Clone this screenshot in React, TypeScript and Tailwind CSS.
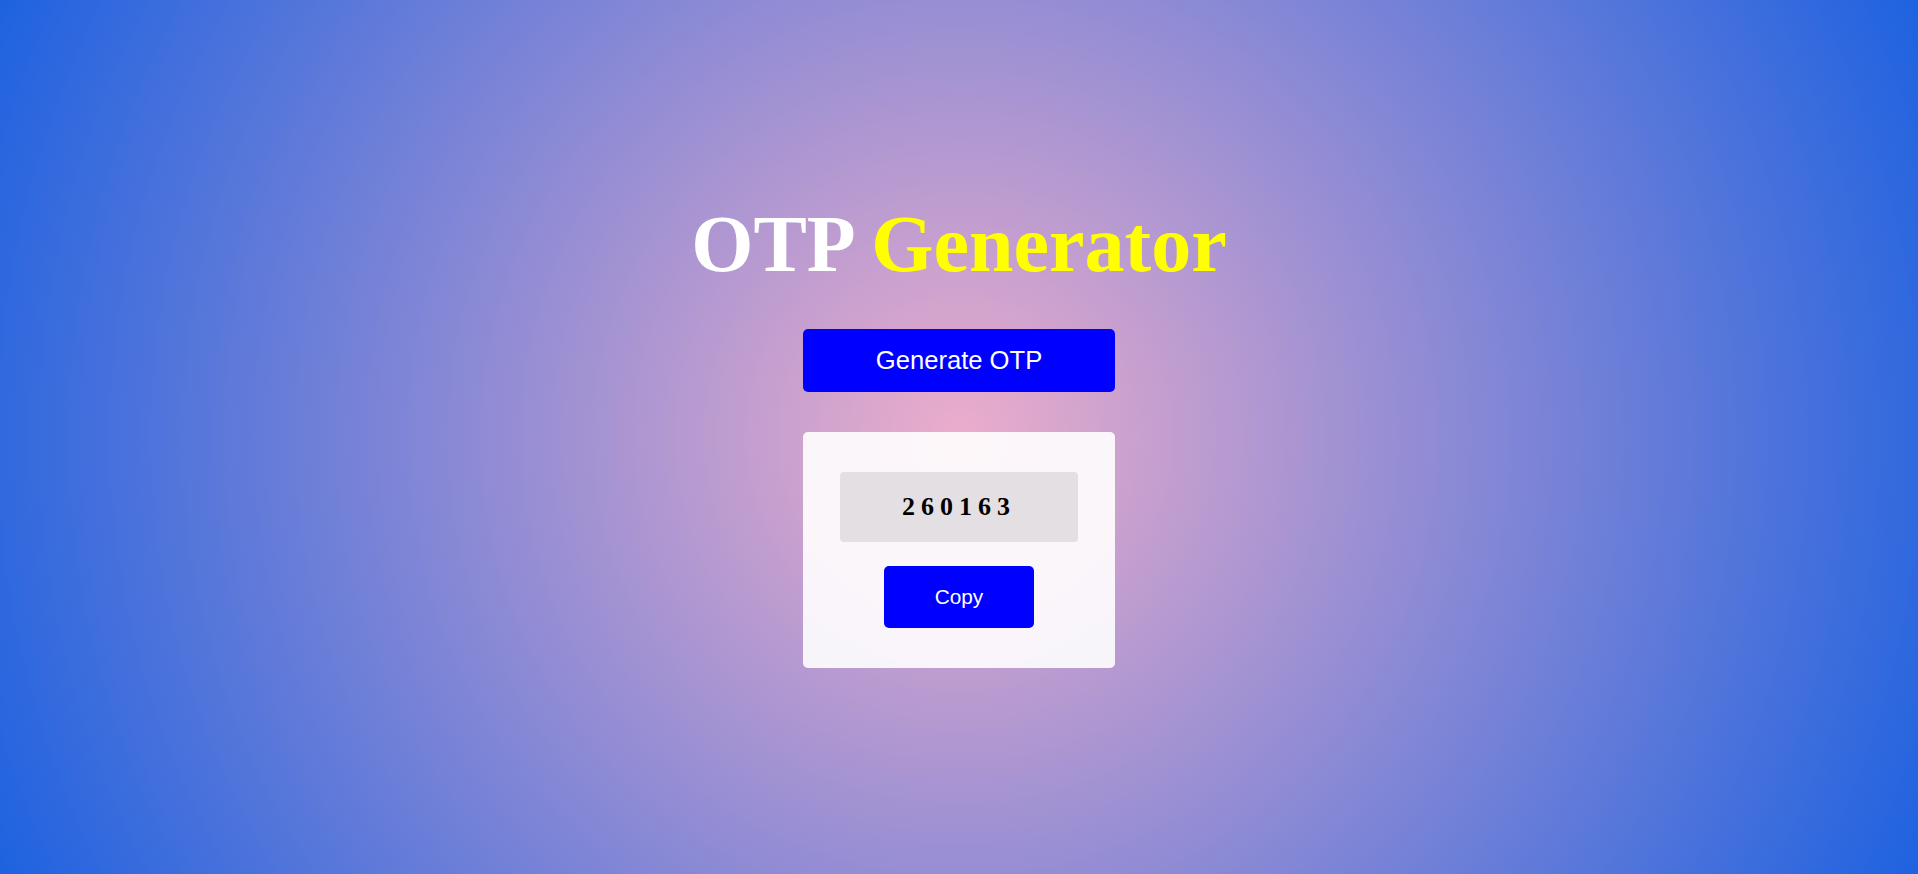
import React, { useState } from 'react';

const App: React.FC = () => {
  const [otp, setOtp] = useState<string>('260163');

  // 6 random digits
  const generateOtp = () => {
    const code = Math.floor(100000 + Math.random() * 900000).toString();
    setOtp(code);
  };

  const copyOtp = () => {
    navigator.clipboard?.writeText(otp).catch(() => {});
  };

  return (
    <div className="min-h-screen w-full flex flex-col items-center justify-center bg-[radial-gradient(circle,#ecadcb_0%,#1e62e0_100%)]">
      <div className="flex flex-col items-center -mt-[6px]">
        <h1 className="text-[80px] leading-[1.107] font-bold font-['Liberation_Serif','Times_New_Roman',serif] text-white mb-[40px]">
          OTP <span className="text-[#ffff00]">Generator</span>
        </h1>

        <button
          onClick={generateOtp}
          className="w-[312px] h-[63px] bg-[#0000ff] text-white rounded-[5px] text-[25.6px] font-['Liberation_Sans',Arial,sans-serif] cursor-pointer"
        >
          Generate OTP
        </button>

        <div className="mt-[40px] w-[312px] h-[236px] bg-white/90 rounded-[5px] flex flex-col items-center pt-[40px]">
          <div className="w-[238px] h-[70px] bg-[#e4dfe2] rounded-[4px] flex items-center justify-center">
            <span className="text-[26px] font-bold tracking-[6px] text-black font-['Liberation_Serif','Times_New_Roman',serif]">
              {otp}
            </span>
          </div>
          <button
            onClick={copyOtp}
            className="mt-[24px] w-[150px] h-[62px] bg-[#0000ff] text-white rounded-[5px] text-[20.8px] font-['Liberation_Sans',Arial,sans-serif] cursor-pointer"
          >
            Copy
          </button>
        </div>
      </div>
    </div>
  );
};

export default App;
